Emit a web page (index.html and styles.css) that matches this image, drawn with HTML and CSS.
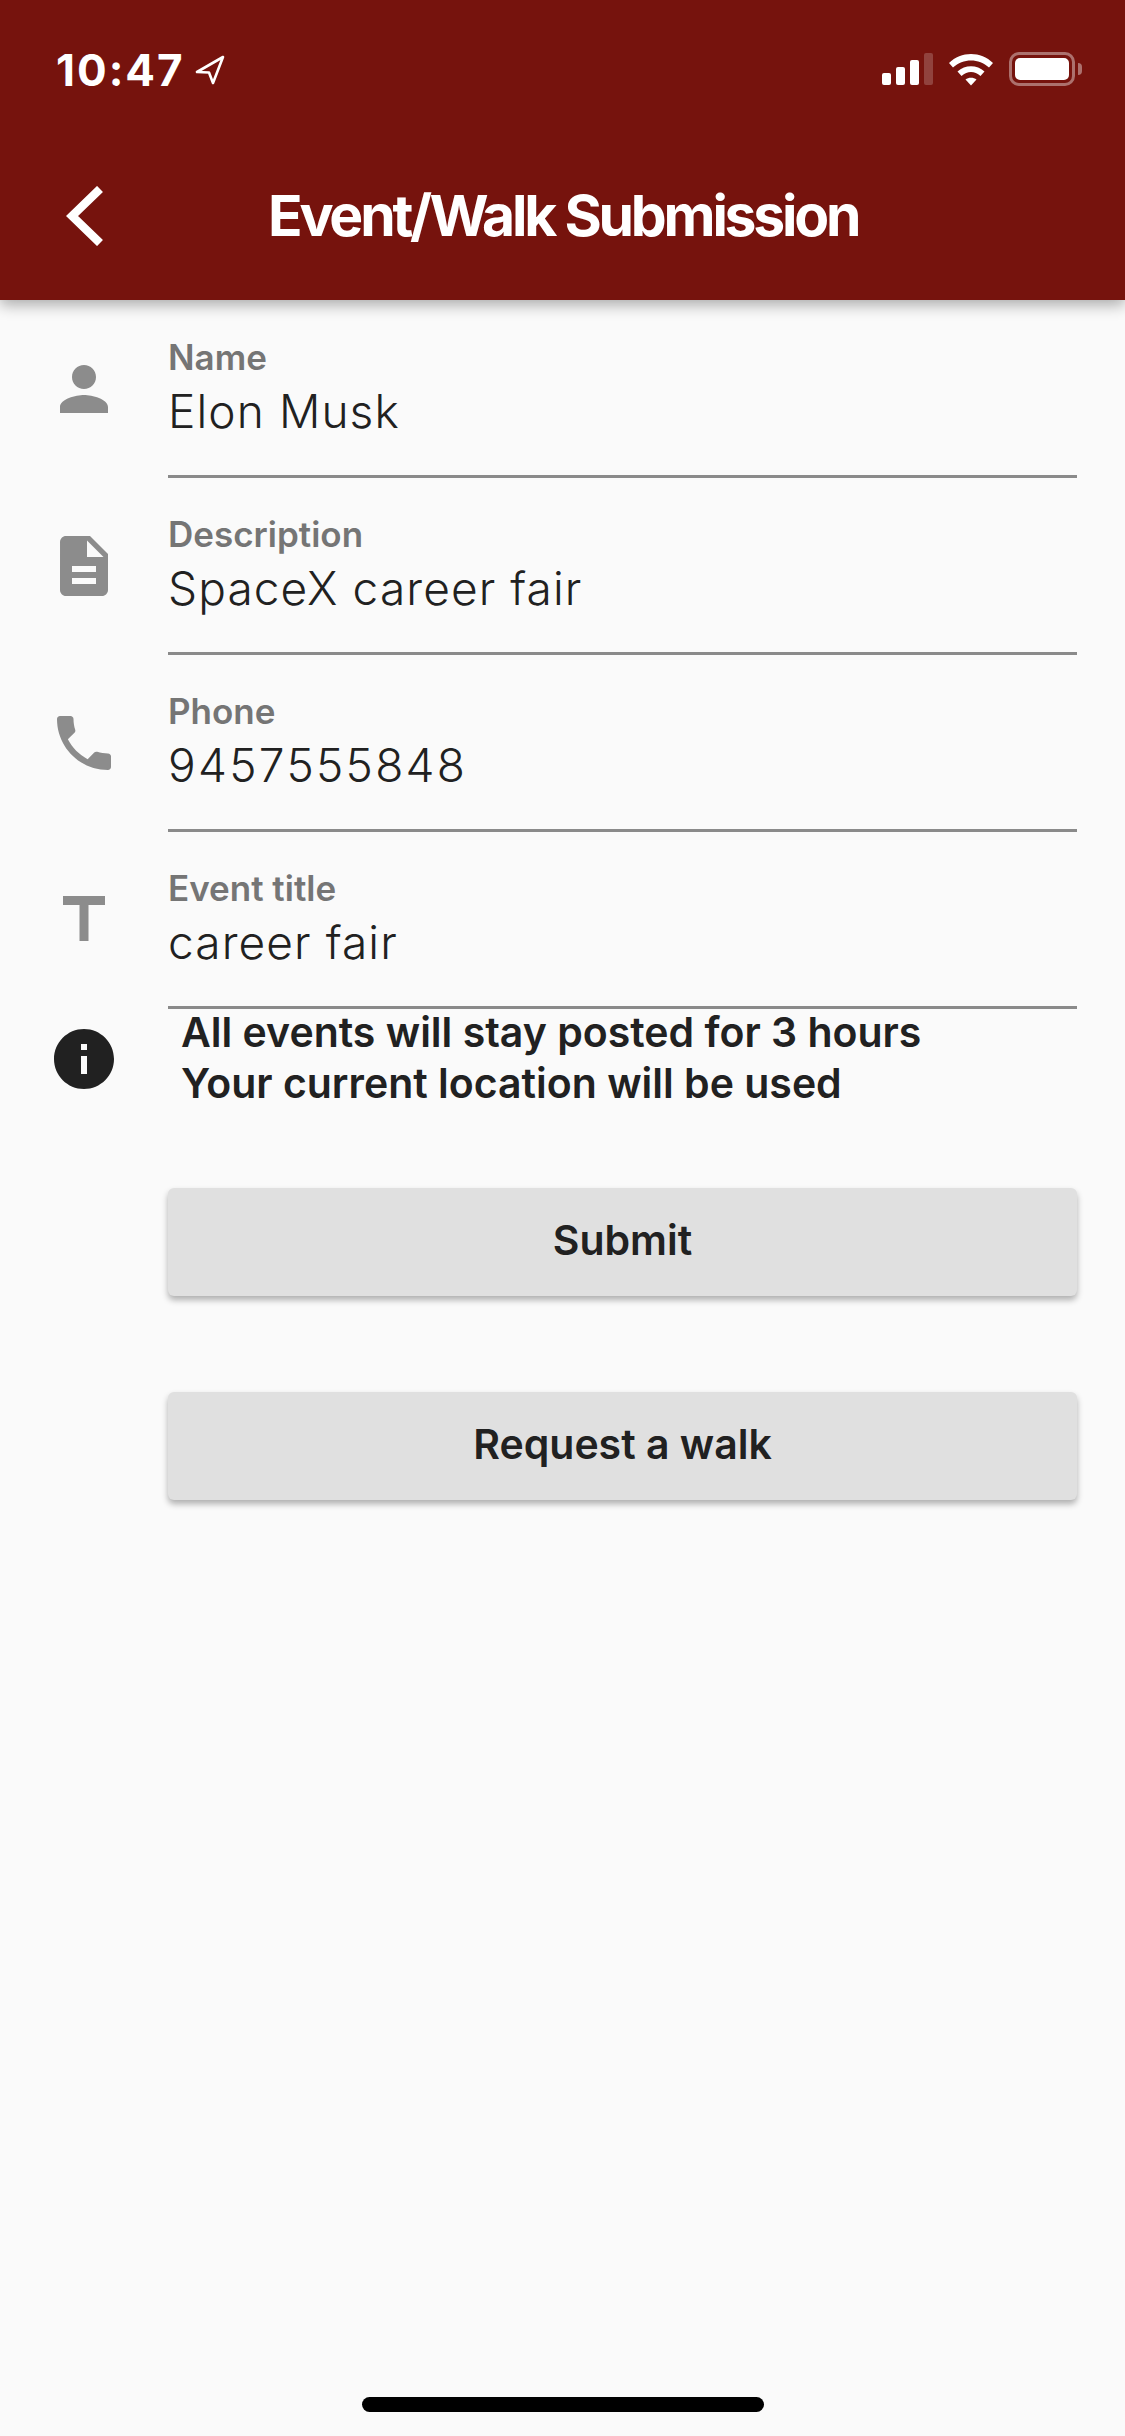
FILE: index.html
```html
<!DOCTYPE html>
<html lang="en">
<head>
    <meta charset="UTF-8">
    <meta name="viewport" content="width=device-width, initial-scale=1.0">
    <title>Event/Walk Submission</title>
    <link rel="stylesheet" href="styles.css">
</head>
<body>
    <div class="page">
        <header class="header">
            <div class="status">
                <div class="status-left">
                    <span class="time">10:47</span>
                    <svg class="arrow" width="30" height="30" viewBox="0 0 30 30"><path d="M28 2 L2 17 L14 17.5 L18 28 Z" fill="none" stroke="#fff" stroke-width="2.6" stroke-linejoin="round"/></svg>
                </div>
                <div class="status-right">
                    <div class="signal">
                        <span class="bar bar1"></span>
                        <span class="bar bar2"></span>
                        <span class="bar bar3"></span>
                        <span class="bar bar4"></span>
                    </div>
                    <svg class="wifi" width="46" height="34" viewBox="0 0 46 34">
                        <path d="M1 11 C13 -1 33 -1 45 11 L41 15.5 C31 6 15 6 5 15.5 Z" fill="#fff"/>
                        <path d="M9.5 19.5 C17 12.5 29 12.5 36.5 19.5 L32.5 24 C26.5 18.5 19.5 18.5 13.5 24 Z" fill="#fff"/>
                        <path d="M17.5 27.5 C20.5 25 25.5 25 28.5 27.5 L23 33.5 Z" fill="#fff"/>
                    </svg>
                    <div class="battery"><span class="battery-level"></span></div>
                    <span class="battery-nub"></span>
                </div>
            </div>
            <div class="nav">
                <svg class="back" width="38" height="60" viewBox="0 0 38 60"><path d="M34 3 L6 30 L34 57" fill="none" stroke="#fff" stroke-width="8.5"/></svg>
                <h1 class="title">Event/Walk Submission</h1>
            </div>
        </header>

        <main class="form">
            <div class="row">
                <svg class="icon" viewBox="0 0 24 24"><path d="M12 12c2.21 0 4-1.79 4-4s-1.79-4-4-4-4 1.79-4 4 1.79 4 4 4zm0 2c-2.67 0-8 1.34-8 4v2h16v-2c0-2.66-5.33-4-8-4z"/></svg>
                <div class="field">
                    <label class="field-label">Name</label>
                    <div class="field-value">Elon Musk</div>
                </div>
            </div>
            <div class="row">
                <svg class="icon" viewBox="0 0 24 24"><path d="M14 2H6c-1.1 0-1.99.9-1.99 2L4 20c0 1.1.89 2 1.99 2H18c1.1 0 2-.9 2-2V8l-6-6zm2 16H8v-2h8v2zm0-4H8v-2h8v2zm-3-5V3.5L18.5 9H13z"/></svg>
                <div class="field">
                    <label class="field-label">Description</label>
                    <div class="field-value">SpaceX career fair</div>
                </div>
            </div>
            <div class="row">
                <svg class="icon" viewBox="0 0 24 24"><path d="M6.62 10.79c1.44 2.83 3.76 5.14 6.59 6.59l2.2-2.2c.27-.27.67-.36 1.02-.24 1.12.37 2.33.57 3.57.57.55 0 1 .45 1 1V20c0 .55-.45 1-1 1-9.39 0-17-7.61-17-17 0-.55.45-1 1-1h3.5c.55 0 1 .45 1 1 0 1.25.2 2.45.57 3.57.11.35.03.74-.25 1.02l-2.2 2.2z"/></svg>
                <div class="field">
                    <label class="field-label">Phone</label>
                    <div class="field-value field-number">9457555848</div>
                </div>
            </div>
            <div class="row">
                <svg class="icon" viewBox="0 0 24 24"><path d="M5 4v3h5.5v12h3V7H19V4z"/></svg>
                <div class="field">
                    <label class="field-label">Event title</label>
                    <div class="field-value">career fair</div>
                </div>
            </div>
            <div class="notice">
                <svg class="icon icon-dark" viewBox="0 0 24 24"><path d="M12 2C6.48 2 2 6.48 2 12s4.48 10 10 10 10-4.48 10-10S17.52 2 12 2zm1 15h-2v-6h2v6zm0-8h-2V7h2v2z"/></svg>
                <p class="notice-text">All events will stay posted for 3 hours<br>Your current location will be used</p>
            </div>
            <button class="btn btn-submit">Submit</button>
            <button class="btn btn-walk">Request a walk</button>
        </main>

        <div class="home-indicator"></div>
    </div>
</body>
</html>
```

FILE: styles.css
```css
* { box-sizing: border-box; }
body { margin: 0; background: #fafafa; font-family: Inter, "Liberation Sans", sans-serif; color: #212121; }
.page { width: 1125px; height: 2436px; display: flex; flex-direction: column; overflow: hidden; }

/* header + status bar */
.header { height: 300px; background: #76130d; color: #fff; box-shadow: 0 5px 14px rgba(0, 0, 0, 0.32); flex-shrink: 0; position: relative; }
.status { height: 120px; padding: 52px 43px 0 56px; display: flex; justify-content: space-between; align-items: flex-start; }
.status-left { display: flex; align-items: center; gap: 10px; }
.time { font-size: 44px; line-height: 36px; font-weight: 700; letter-spacing: 2px; }
.status-right { display: flex; align-items: flex-start; }
.signal { display: flex; align-items: flex-end; gap: 5px; height: 33px; margin-right: 15px; }
.bar { width: 9px; background: #fff; border-radius: 2px; display: block; }
.bar1 { height: 12px; }
.bar2 { height: 18px; }
.bar3 { height: 25px; }
.bar4 { height: 32px; opacity: 0.2; }
.wifi { margin-right: 15px; }
.battery { width: 66px; height: 34px; border: 3px solid rgba(255, 255, 255, 0.4); border-radius: 10px; padding: 3px; }
.battery-level { display: block; height: 100%; background: #fff; border-radius: 5px; }
.battery-nub { width: 4px; height: 12px; margin: 11px 0 0 3px; background: rgba(255, 255, 255, 0.4); border-radius: 0 4px 4px 0; }
.nav { height: 180px; padding: 66px 0 0 66px; display: flex; align-items: flex-start; position: relative; }
.back { flex-shrink: 0; }
.title { margin: 0 0 0 164px; font-size: 57px; line-height: 60px; font-weight: 700; letter-spacing: -3.2px; white-space: nowrap; }

/* form rows */
.form { padding-top: 1px; }
.row { height: 177px; display: flex; }
.icon { width: 72px; height: 72px; fill: #8c8c8c; margin: 52px 48px 0; flex-shrink: 0; }
.icon-dark { fill: #212121; margin-top: 14px; }
.field { width: 909px; border-bottom: 3px solid #8a8a8a; padding-top: 36px; }
.field-label { display: block; font-size: 35px; line-height: 40px; font-weight: 600; color: #757575; }
.field-value { margin-top: 6px; font-size: 46px; line-height: 56px; letter-spacing: 1.1px; font-weight: 300; }
.field-number { letter-spacing: 2.3px; }
.notice { display: flex; height: 179px; }
.notice-text { margin: -2px 0 0 13px; font-size: 41px; line-height: 51px; font-weight: 600; }
.btn { display: block; width: 909px; height: 108px; margin-left: 168px; padding-bottom: 5px; background: #e0e0e0; border: none; border-radius: 6px; box-shadow: 0 4px 6px rgba(0, 0, 0, 0.3); font-family: inherit; font-size: 41px; font-weight: 600; color: #212121; }
.btn-walk { margin-top: 96px; }

.home-indicator { width: 402px; height: 15px; margin: auto auto 24px; background: #000; border-radius: 8px; flex-shrink: 0; }
```
